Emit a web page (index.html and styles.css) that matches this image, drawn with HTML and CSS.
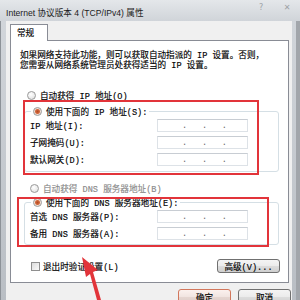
FILE: index.html
```html
<!DOCTYPE html>
<html lang="zh-CN">
<head>
    <meta charset="UTF-8">
    <meta name="viewport" content="width=device-width, initial-scale=1.0">
    <title>Internet 协议版本 4 (TCP/IPv4) 属性</title>
    <link rel="stylesheet" href="styles.css">
</head>
<body>
    <div class="window">
        <div class="titlebar">
            <span class="title">Internet 协议版本 4 (TCP/IPv4) 属性</span>
            <span class="tb-btn">?</span>
            <span class="tb-btn">✕</span>
        </div>

        <div class="client">
            <div class="tab">常规</div>
            <div class="panel">
                <p class="desc">如果网络支持此功能，则可以获取自动指派的 IP 设置。否则，<br>您需要从网络系统管理员处获得适当的 IP 设置。</p>

                <div class="option"><span class="radio"></span>自动获得 IP 地址(O)</div>

                <fieldset class="group group-ip">
                    <legend><span class="radio checked"></span>使用下面的 IP 地址(S):</legend>
                    <div class="row"><span>IP 地址(I):</span><span class="ipbox"><b>.</b><b>.</b><b>.</b></span></div>
                    <div class="row"><span>子网掩码(U):</span><span class="ipbox"><b>.</b><b>.</b><b>.</b></span></div>
                    <div class="row"><span>默认网关(D):</span><span class="ipbox"><b>.</b><b>.</b><b>.</b></span></div>
                </fieldset>

                <div class="option option-dns disabled"><span class="radio"></span>自动获得 DNS 服务器地址(B)</div>

                <fieldset class="group group-dns">
                    <legend><span class="radio checked"></span>使用下面的 DNS 服务器地址(E):</legend>
                    <div class="row"><span>首选 DNS 服务器(P):</span><span class="ipbox"><b>.</b><b>.</b><b>.</b></span></div>
                    <div class="row"><span>备用 DNS 服务器(A):</span><span class="ipbox"><b>.</b><b>.</b><b>.</b></span></div>
                </fieldset>

                <div class="bottom">
                    <div class="check-row"><span class="checkbox"></span>退出时验证设置(L)</div>
                    <div class="btn btn-adv">高级(V)...</div>
                </div>
            </div>

            <div class="actions">
                <div class="btn btn-ok">确定</div>
                <div class="btn">取消</div>
            </div>
        </div>

        <!-- 标注 -->
        <div class="mark mark-ip"></div>
        <div class="mark mark-dns"></div>
        <svg class="arrow" width="300" height="300" viewBox="0 0 300 300">
            <polygon points="82,257 98,270 93,272 101,300 97,300 90,274 86,277" fill="#e2343a"/>
        </svg>
    </div>
</body>
</html>
```

FILE: styles.css
```css
body {
    margin: 0;
    padding: 0;
    overflow: hidden;
}

.window {
    position: relative;
    width: 300px;
    height: 300px;
    background: linear-gradient(to bottom, #d3d7dc, #b9bec4);
    box-shadow: inset 1px 0 0 #8d9298, inset -4px 0 0 #a2a6ab;
    font-family: "Liberation Mono", "Noto Sans CJK SC", monospace;
    font-size: 8.6px;
    color: #000;
    -webkit-text-stroke: 0.15px #000;
}

.titlebar {
    display: flex;
    align-items: center;
    height: 21px;
    padding-left: 6px;
    background: linear-gradient(to bottom, #e4e7ea, #d0d4d9);
}

.title {
    flex: 1;
    font-family: "Liberation Sans", "Noto Sans CJK SC", sans-serif;
    font-size: 8.6px;
    color: #1c1c1c;
    -webkit-text-stroke: 0;
    margin-top: 2px;
}

.tb-btn {
    width: 26px;
    text-align: center;
    font-family: "DejaVu Sans", sans-serif;
    font-size: 8px;
    color: #9ea2a6;
    -webkit-text-stroke: 0;
    margin-top: -6px;
}

.client {
    margin-left: 6px;
    width: 286px;
    height: 279px;
    padding-top: 3px;
    box-sizing: border-box;
    background: #f0f0f0;
}

.tab {
    position: relative;
    z-index: 1;
    width: 38px;
    height: 17px;
    margin-left: 4px;
    margin-bottom: -1px;
    box-sizing: border-box;
    padding: 3px 0 0 6px;
    border: 1px solid #898c95;
    border-bottom: none;
    background: #fff;
    line-height: 12px;
}

.panel {
    width: 279px;
    margin-left: 4px;
    box-sizing: border-box;
    border: 1px solid #898c95;
    background: #fff;
    padding: 10px 0 9px 0;
}

.desc {
    margin: 0 0 0 9px;
    line-height: 10px;
}

.option {
    display: flex;
    align-items: center;
    height: 12px;
    margin: 18px 0 0 16px;
}

.option-dns {
    margin-top: 10px;
    margin-left: 19px;
}

.disabled {
    color: #8a8a8a;
    -webkit-text-stroke: 0.15px #8a8a8a;
}

.radio {
    display: inline-block;
    width: 9px;
    height: 9px;
    box-sizing: border-box;
    margin-right: 4px;
    border: 1px solid #9a9a9a;
    border-radius: 50%;
    background: radial-gradient(circle at 40% 35%, #fff, #dcdcdc);
}

.radio.checked {
    background: radial-gradient(circle, #b34a25 0, #d26a3e 2px, #f3ddd2 3px, #e8e8e8 4px);
}

.group {
    margin: 4px 0 0 13px;
    width: 255px;
    box-sizing: border-box;
    padding: 2px 30px 5px 5px;
    border: 1px solid #d5dfe5;
    border-radius: 3px;
}

.group-dns {
    margin-top: 2px;
    padding-bottom: 4px;
}

.group legend {
    display: flex;
    align-items: center;
    height: 12px;
    padding: 0 2px;
    margin-left: 1px;
}

.row {
    display: flex;
    align-items: center;
    justify-content: space-between;
    height: 13px;
    margin-bottom: 4px;
}

.row:last-child {
    margin-bottom: 0;
}

.ipbox {
    display: flex;
    justify-content: space-between;
    width: 91px;
    height: 13px;
    box-sizing: border-box;
    padding: 0 20px 0 24px;
    border: 1px solid #dde2e7;
    border-top-color: #c8cdd3;
    line-height: 12px;
    color: #666;
    -webkit-text-stroke: 0;
}

.ipbox b {
    font-weight: normal;
}

.bottom {
    display: flex;
    align-items: center;
    justify-content: space-between;
    margin: 14px 8px 0 20px;
}

.check-row {
    display: flex;
    align-items: center;
}

.checkbox {
    display: inline-block;
    width: 9px;
    height: 9px;
    box-sizing: border-box;
    margin-right: 3px;
    border: 1px solid #8f8f8f;
    background: linear-gradient(135deg, #dcdcdc, #fafafa);
}

.btn {
    display: flex;
    align-items: center;
    justify-content: center;
    width: 53px;
    height: 16px;
    box-sizing: border-box;
    border: 1px solid #707070;
    border-radius: 3px;
    background: linear-gradient(to bottom, #f4f4f4 0, #ebebeb 50%, #dddddd 50%, #cfcfcf 100%);
}

.btn-adv {
    width: 63px;
    height: 14px;
}

.btn-ok {
    border-color: #d2775c;
    background: linear-gradient(to bottom, #fbf1ee 0, #f1e4e0 50%, #e6d6d1 50%, #dccbc6 100%);
}

.actions {
    display: flex;
    justify-content: flex-end;
    gap: 7px;
    margin-top: 6px;
    padding-right: 1px;
}

.mark {
    position: absolute;
    border: 2px solid #e2343a;
    box-sizing: border-box;
}

.mark-ip {
    left: 23px;
    top: 100px;
    width: 236px;
    height: 75px;
}

.mark-dns {
    left: 17px;
    top: 197px;
    width: 252px;
    height: 50px;
}

.arrow {
    position: absolute;
    left: 0;
    top: 0;
}
```
